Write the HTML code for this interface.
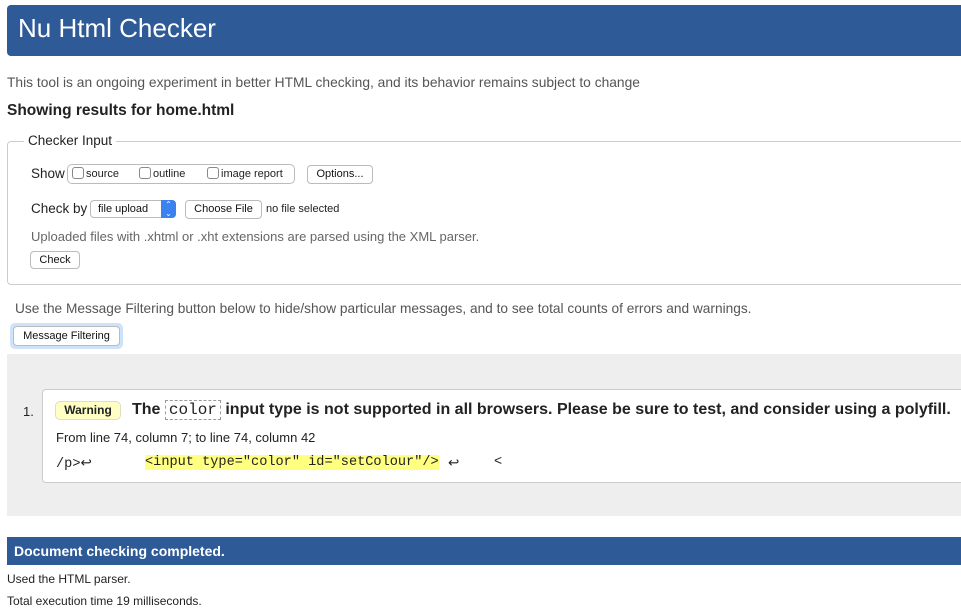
<!DOCTYPE html>
<html><head><meta charset="utf-8"><style>
body{margin:0;width:961px;height:614px;overflow:hidden;background:#fff;font-family:"Liberation Sans",Arial,sans-serif;position:relative;color:#222}
.a{position:absolute;white-space:nowrap}
.btn{position:absolute;border:1px solid #bbb;border-radius:4px;background:#fff;font-size:11px;box-sizing:border-box;text-align:center;color:#111}
.cb{display:inline-block;width:10px;height:10px;border:1px solid #888;border-radius:3px;vertical-align:-2px;margin-right:2px;background:#fff}
.mono{font-family:"Liberation Mono",monospace}
</style></head><body>
<div class="a" style="left:7px;top:5px;width:960px;height:51px;background:#2e5a98;border-radius:4px 0 0 4px"></div>
<div class="a" style="left:18px;top:13px;font-size:26px;color:#fff">Nu Html Checker</div>
<div class="a" style="left:7px;top:75px;font-size:13.8px;color:#555">This tool is an ongoing experiment in better HTML checking, and its behavior remains subject to change</div>
<div class="a" style="left:7px;top:102px;font-size:15.5px;font-weight:bold">Showing results for home.html</div>
<div class="a" style="left:7px;top:141px;width:960px;height:144px;border:1px solid #ccc;border-radius:4px;box-sizing:border-box"></div>
<div class="a" style="left:24px;top:133px;font-size:13.5px;background:#fff;padding:0 4px">Checker Input</div>
<div class="a" style="left:31px;top:166px;font-size:13.5px">Show</div>
<div class="a" style="left:67px;top:164px;width:228px;height:20px;border:1px solid #bbb;border-radius:5px;box-sizing:border-box"></div>
<div class="a" style="left:72px;top:167px;font-size:11px"><span class="cb"></span>source</div>
<div class="a" style="left:139px;top:167px;font-size:11px"><span class="cb"></span>outline</div>
<div class="a" style="left:207px;top:167px;font-size:11px"><span class="cb"></span>image report</div>
<div class="btn" style="left:307px;top:165px;width:66px;height:19px;line-height:17px">Options...</div>
<div class="a" style="left:31px;top:201px;font-size:13.5px">Check by</div>
<div class="btn" style="left:90px;top:200px;width:86px;height:18px;line-height:16px;text-align:left;padding-left:7px">file upload</div>
<div class="a" style="left:161px;top:200px;width:15px;height:18px;background:#3b82f0;border-radius:0 4px 4px 0;color:#fff;font-size:8px;text-align:center;line-height:9px">⌃<br>⌄</div>
<div class="btn" style="left:185px;top:200px;width:77px;height:19px;line-height:17px">Choose File</div>
<div class="a" style="left:266px;top:203px;font-size:11px">no file selected</div>
<div class="a" style="left:31px;top:229px;font-size:13px;color:#666">Uploaded files with .xhtml or .xht extensions are parsed using the XML parser.</div>
<div class="btn" style="left:30px;top:251px;width:50px;height:18px;line-height:16px">Check</div>
<div class="a" style="left:15px;top:301px;font-size:13.7px;color:#555">Use the Message Filtering button below to hide/show particular messages, and to see total counts of errors and warnings.</div>
<div class="a" style="left:10px;top:323px;width:113px;height:26px;border-radius:5px;background:#cfe2fb"></div>
<div class="btn" style="left:13px;top:326px;width:107px;height:20px;line-height:18px">Message Filtering</div>
<div class="a" style="left:7px;top:354px;width:960px;height:162px;background:#eee"></div>
<div class="a" style="left:42px;top:389px;width:930px;height:94px;background:#fff;border:1px solid #ccc;border-radius:4px;box-sizing:border-box"></div>
<div class="a" style="left:23px;top:404px;font-size:13px">1.</div>
<div class="a" style="left:55px;top:401px;width:66px;height:19px;background:#ffffc4;border:1px solid #ddc;border-radius:5px;box-sizing:border-box;font-size:12px;font-weight:bold;text-align:center;line-height:17px">Warning</div>
<div class="a" style="left:132px;top:401px;font-size:16px;font-weight:bold">The <span class="mono" style="font-weight:normal;border:1px dashed #999;padding:0 3px">color</span> input type is not supported in all browsers. Please be sure to test, and consider using a polyfill.</div>
<div class="a" style="left:56px;top:430px;font-size:13px">From line 74, column 7; to line 74, column 42</div>
<div class="a mono" style="left:56px;top:455px;font-size:13.6px">/p>↩</div>
<div class="a mono" style="left:145px;top:455px;font-size:13.6px;background:#ffff80">&lt;input type="color" id="setColour"/></div>
<div class="a mono" style="left:448px;top:455px;font-size:13.6px">↩</div>
<div class="a mono" style="left:494px;top:455px;font-size:13.6px">&lt;</div>
<div class="a" style="left:7px;top:537px;width:960px;height:28px;background:#2e5a98"></div>
<div class="a" style="left:14px;top:543px;font-size:14px;font-weight:bold;color:#fff">Document checking completed.</div>
<div class="a" style="left:7px;top:572px;font-size:12px">Used the HTML parser.</div>
<div class="a" style="left:7px;top:594px;font-size:12px">Total execution time 19 milliseconds.</div>
</body></html>
